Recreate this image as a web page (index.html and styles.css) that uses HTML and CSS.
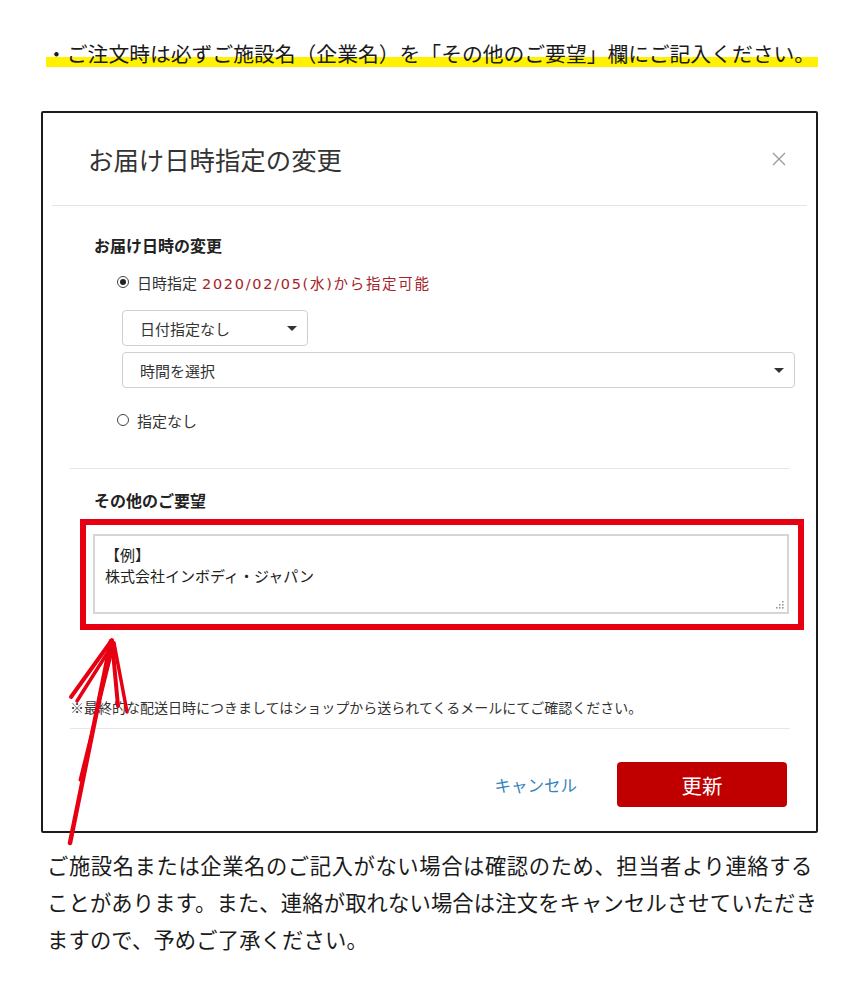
FILE: index.html
```html
<!DOCTYPE html>
<html lang="ja">
<head>
<meta charset="utf-8">
<title>お届け日時指定の変更</title>
<link rel="stylesheet" href="styles.css">
</head>
<body>
<div class="page">
  <p class="notice"><span class="hl">・ご注文時は必ずご施設名（企業名）を「その他のご要望」欄にご記入ください。</span></p>

  <div class="dialog">
    <div class="dlg-head">
      <h2 class="dlg-title">お届け日時指定の変更</h2>
      <span class="close">
        <svg width="14" height="14" viewBox="0 0 14 14"><path d="M1 1L13 13M13 1L1 13" stroke="#9a9a9a" stroke-width="1.3" fill="none"/></svg>
      </span>
    </div>
    <div class="dlg-body">
      <section class="sec sec-date">
        <h3 class="sec-title">お届け日時の変更</h3>
        <div class="radio-row">
          <span class="radio on"></span>
          <span class="lbl">日時指定</span>
          <span class="avail">2020/02/05(水)から指定可能</span>
        </div>
        <div class="selects">
          <div class="select sel-date"><span>日付指定なし</span><i class="caret"></i></div>
          <div class="select sel-time"><span>時間を選択</span><i class="caret"></i></div>
        </div>
        <div class="radio-row row2">
          <span class="radio"></span>
          <span class="lbl">指定なし</span>
        </div>
      </section>
      <section class="sec sec-req">
        <h3 class="sec-title">その他のご要望</h3>
        <div class="redbox">
          <div class="textarea">
            <div>【例】</div>
            <div>株式会社インボディ・ジャパン</div>
            <svg class="grip" width="9" height="9" viewBox="0 0 9 9">
              <rect x="7" y="1" width="1.6" height="1.6" fill="#9a9a9a"/>
              <rect x="4" y="4" width="1.6" height="1.6" fill="#9a9a9a"/>
              <rect x="7" y="4" width="1.6" height="1.6" fill="#9a9a9a"/>
              <rect x="1" y="7" width="1.6" height="1.6" fill="#9a9a9a"/>
              <rect x="4" y="7" width="1.6" height="1.6" fill="#9a9a9a"/>
              <rect x="7" y="7" width="1.6" height="1.6" fill="#9a9a9a"/>
            </svg>
          </div>
        </div>
        <p class="note">※最終的な配送日時につきましてはショップから送られてくるメールにてご確認ください。</p>
      </section>
      <div class="dlg-foot">
        <span class="cancel">キャンセル</span>
        <span class="btn-update">更新</span>
      </div>
    </div>
  </div>

  <p class="bottom"><span class="ln ln1">ご施設名または企業名のご記入がない場合は確認のため、担当者より連絡する</span><span class="ln ln2">ことがあります。また、連絡が取れない場合は注文をキャンセルさせていただき</span><span class="ln ln3">ますので、予めご了承ください。</span></p>

  <svg class="arrow" width="857" height="1000" viewBox="0 0 857 1000">
    <g stroke="#e60012" stroke-linecap="round" fill="none">
      <path d="M70 843L111 641" stroke-width="4.5"/>
      <path d="M80 780L114 643" stroke-width="3"/>
      <path d="M112 640L71 697" stroke-width="4"/>
      <path d="M113 644L77 701" stroke-width="3.5"/>
      <path d="M112 641L118 706" stroke-width="4"/>
      <path d="M114 643L127 712" stroke-width="3.5"/>
    </g>
  </svg>
</div>
</body>
</html>
```

FILE: styles.css
```css
* { box-sizing: border-box; }
html, body { margin: 0; padding: 0; background: #fff; }
body {
  font-family: "Noto Sans CJK JP", "Noto Sans", sans-serif;
  color: #1a1a1a;
}
.page { position: relative; width: 857px; height: 1000px; overflow: hidden; }

.notice {
  margin: 0;
  padding: 38px 0 0 46px;
  height: 68px;
}
.hl {
  display: inline-block;
  height: 30px;
  line-height: 30px;
  font-size: 20.8px;
  white-space: nowrap;
  letter-spacing: 0;
  padding-right: 3px;
  background: linear-gradient(to bottom, transparent 0, transparent 63%, #fff100 63%, #fff100 98%, transparent 98%);
}

.dialog {
  margin: 43px 0 0 41px;
  width: 777px;
  height: 722px;
  border: 2px solid #1c1c1c;
  border-radius: 2px;
  background: #fff;
  display: flex;
  flex-direction: column;
}
.dlg-head {
  margin: 0 9px;
  height: 93px;
  border-bottom: 1px solid #e4e4e4;
  display: flex;
  align-items: center;
  justify-content: space-between;
  padding: 0 21px 0 36px;
}
.dlg-title {
  margin: 0;
  font-size: 25.4px;
  font-weight: 400;
  color: #333;
  line-height: 30px;
}
.close { display: flex; }

.dlg-body {
  margin: 0 26px 0 27px;
}
.sec-title {
  margin: 0;
  font-size: 16px;
  font-weight: 700;
  line-height: 22px;
  color: #222;
  padding-left: 24px;
}
.sec-date {
  padding-top: 28px;
  padding-bottom: 37px;
  border-bottom: 1px solid #e6e6e6;
}
.radio-row {
  display: flex;
  align-items: center;
  margin-top: 15px;
  padding-left: 47px;
  height: 22px;
  font-size: 15px;
  color: #333;
}
.radio {
  width: 12px;
  height: 12px;
  border: 1.3px solid #444;
  border-radius: 50%;
  margin-right: 8px;
  display: flex;
  align-items: center;
  justify-content: center;
  flex: none;
}
.radio.on::after {
  content: "";
  width: 6px;
  height: 6px;
  border-radius: 50%;
  background: #222;
}
.lbl { margin-right: 5px; }
.avail {
  color: #a62228;
  font-family: "DejaVu Sans", "Noto Sans CJK JP", sans-serif;
  font-size: 14.5px;
  letter-spacing: 1.7px;
}
.selects {
  margin-top: 17px;
  padding-left: 52px;
  display: flex;
  flex-direction: column;
  gap: 6px;
}
.select {
  height: 36px;
  border: 1px solid #cfcfcf;
  border-radius: 4px;
  display: flex;
  align-items: center;
  justify-content: space-between;
  padding: 0 10px 0 17px;
  font-size: 15px;
  color: #333;
}
.sel-date { width: 186px; padding-right: 10px; }
.sel-time { width: 673px; }
.caret {
  width: 0;
  height: 0;
  border-left: 5px solid transparent;
  border-right: 5px solid transparent;
  border-top: 5.5px solid #333;
}
.row2 { margin-top: 21px; padding-left: 47px; }

.sec-req { padding-top: 20px; border-bottom: 1px solid #e6e6e6; padding-bottom: 11px; }
.redbox {
  margin-top: 8px;
  margin-left: 10px;
  width: 724px;
  height: 111px;
  border: 6px solid #e60012;
  padding: 9px 9px 10px 7px;
}
.textarea {
  position: relative;
  width: 696px;
  height: 80px;
  border: 2px solid #d6d6d6;
  padding: 8px 10px;
  font-size: 15px;
  line-height: 21px;
  color: #222;
}
.grip { position: absolute; right: 3px; bottom: 3px; }
.note {
  margin: 67px 0 0 0;
  font-size: 14px;
  line-height: 20px;
  color: #333;
  white-space: nowrap;
}

.dlg-foot {
  padding-top: 33px;
  padding-right: 3px;
  display: flex;
  justify-content: flex-end;
  align-items: center;
  gap: 40px;
}
.cancel { font-size: 16.5px; color: #3484bb; }
.btn-update {
  width: 170px;
  height: 45px;
  border-radius: 4px;
  background: #c00000;
  color: #fff;
  font-size: 20.5px;
  display: flex;
  align-items: center;
  justify-content: center;
}

.bottom {
  margin: 13px 0 0 0;
  padding-left: 47px;
  font-size: 21.3px;
  line-height: 37px;
  color: #1a1a1a;
  white-space: nowrap;
}
.ln { display: block; }
.ln1 { letter-spacing: 0.6px; }
.ln2 { letter-spacing: 0.15px; }
.ln3 { letter-spacing: 0.15px; }

.arrow { position: absolute; left: 0; top: 0; pointer-events: none; }
```
